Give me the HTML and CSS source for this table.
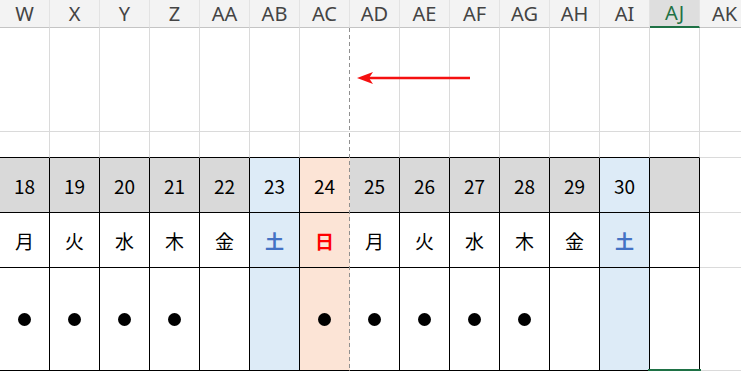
FILE: index.html
```html
<!DOCTYPE html>
<html lang="ja">
<head>
<meta charset="utf-8">
<link rel="stylesheet" href="styles.css">
</head>
<body>
<div class="sheet">
  <div class="row hdr">
    <div class="ch">W</div><div class="ch">X</div><div class="ch">Y</div><div class="ch">Z</div><div class="ch">AA</div><div class="ch">AB</div><div class="ch">AC</div><div class="ch">AD</div><div class="ch">AE</div><div class="ch">AF</div><div class="ch">AG</div><div class="ch">AH</div><div class="ch">AI</div><div class="ch act">AJ</div><div class="ch">AK</div>
  </div>
  <div class="row ra">
    <div class="c"></div><div class="c"></div><div class="c"></div><div class="c"></div><div class="c"></div><div class="c"></div><div class="c brk"></div><div class="c"></div><div class="c"></div><div class="c"></div><div class="c"></div><div class="c"></div><div class="c"></div><div class="c"></div><div class="c"></div>
  </div>
  <div class="row rb">
    <div class="c tb"></div><div class="c tb"></div><div class="c tb"></div><div class="c tb"></div><div class="c tb"></div><div class="c tb"></div><div class="c tb brk"></div><div class="c tb"></div><div class="c tb"></div><div class="c tb"></div><div class="c tb"></div><div class="c tb"></div><div class="c tb"></div><div class="c tb"></div><div class="c"></div>
  </div>
  <div class="row rd">
    <div class="c t g">18</div><div class="c t g">19</div><div class="c t g">20</div><div class="c t g">21</div><div class="c t g">22</div><div class="c t sat">23</div><div class="c t sun brk">24</div><div class="c t g">25</div><div class="c t g">26</div><div class="c t g">27</div><div class="c t g">28</div><div class="c t g">29</div><div class="c t sat">30</div><div class="c t g"></div><div class="c"></div>
  </div>
  <div class="row rw">
    <div class="c t">月</div><div class="c t">火</div><div class="c t">水</div><div class="c t">木</div><div class="c t">金</div><div class="c t sat"><span class="blue">土</span></div><div class="c t sun brk"><span class="red">日</span></div><div class="c t">月</div><div class="c t">火</div><div class="c t">水</div><div class="c t">木</div><div class="c t">金</div><div class="c t sat"><span class="blue">土</span></div><div class="c t"></div><div class="c"></div>
  </div>
  <div class="row rp">
    <div class="c t"><i class="dot"></i></div><div class="c t"><i class="dot"></i></div><div class="c t"><i class="dot"></i></div><div class="c t"><i class="dot"></i></div><div class="c t"></div><div class="c t sat"></div><div class="c t sun brk"><i class="dot"></i></div><div class="c t"><i class="dot"></i></div><div class="c t"><i class="dot"></i></div><div class="c t"><i class="dot"></i></div><div class="c t"><i class="dot"></i></div><div class="c t"></div><div class="c t sat"></div><div class="c t"></div><div class="c"></div>
  </div>
  <div class="pagebreak"></div>
  <div class="sel"></div>
  <svg class="arrow" width="130" height="20" viewBox="350 68 130 20">
    <line x1="470" y1="78" x2="366" y2="78" stroke="#f51010" stroke-width="2.4"/>
    <polygon points="357,78 373,72 369,78 373,84" fill="#f51010"/>
  </svg>
</div>
</body>
</html>
```

FILE: styles.css
```css
html, body {
  margin: 0;
  padding: 0;
  background: #ffffff;
}
.sheet {
  position: relative;
  width: 741px;
  height: 371px;
  overflow: hidden;
  font-family: "Noto Sans CJK JP", "Noto Sans", sans-serif;
}
.row {
  display: flex;
  width: 750px;
}
.ch {
  flex: 0 0 50px;
  box-sizing: border-box;
  height: 28px;
  background: #f3f3f3;
  border-right: 1px solid #e3e3e3;
  border-bottom: 1px solid #c4c4c4;
  display: flex;
  align-items: center;
  justify-content: center;
  font-family: "Noto Sans", "Open Sans", sans-serif;
  font-size: 20px;
  color: #444444;
  padding-bottom: 1px;
}
.ch.act {
  background: #dedede;
  color: #1e7145;
  border-bottom: 2px solid #1e7145;
}
.c {
  flex: 0 0 50px;
  box-sizing: border-box;
  border-right: 1px solid #dadada;
  border-bottom: 1px solid #dadada;
}
.ra .c { height: 104px; }
.rb .c { height: 26px; }
.rd .c { height: 55px; }
.rw .c { height: 55px; }
.rp .c { height: 103px; }
.c.tb { border-bottom-color: #000000; }
.c.t {
  border-right-color: #000000;
  border-bottom-color: #000000;
  display: flex;
  align-items: center;
  justify-content: center;
  font-size: 19px;
  color: #000000;
}
.c.g { background: #d9d9d9; }
.c.sat { background: #ddebf7; }
.c.sun { background: #fce4d6; }
.c.brk { border-right-color: transparent; }
.blue { color: #4472c4; font-weight: 700; }
.red { color: #ff0000; font-weight: 700; }
.dot {
  display: block;
  width: 13px;
  height: 13px;
  border-radius: 50%;
  background: #000000;
}
.pagebreak {
  position: absolute;
  left: 349px;
  top: 28px;
  width: 1px;
  height: 343px;
  background: repeating-linear-gradient(to bottom, #909090 0, #909090 4px, transparent 4px, transparent 7px);
}
.sel {
  position: absolute;
  left: 648px;
  top: 369px;
  width: 53px;
  height: 2px;
  background: #1e7145;
}
.arrow {
  position: absolute;
  left: 350px;
  top: 68px;
}
```
